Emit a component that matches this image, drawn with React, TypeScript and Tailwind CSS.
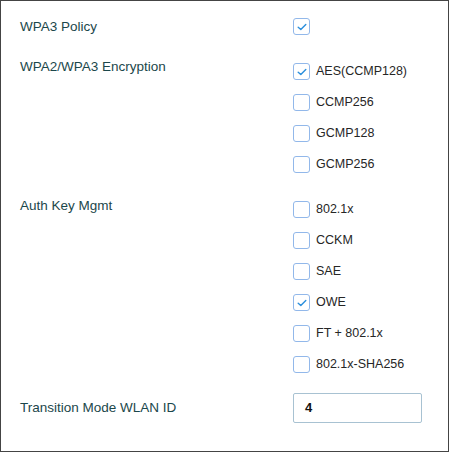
import React from "react";

function Box({ checked }: { checked?: boolean }) {
  return (
    <span className="flex h-[17px] w-[17px] shrink-0 items-center justify-center rounded-[3px] border-[1.5px] border-[#92b8ea] bg-white">
      {checked && (
        <svg width="10" height="8" viewBox="0 0 10 8">
          <path d="M1.2 4.2 L3.8 6.6 L8.8 1.4" fill="none" stroke="#2b8fdc" strokeWidth="1.4" strokeLinecap="round" strokeLinejoin="round" />
        </svg>
      )}
    </span>
  );
}

function Option({ label, checked }: { label?: string; checked?: boolean }) {
  return (
    <div className="flex h-[17px] items-center">
      <Box checked={checked} />
      {label && <span className="ml-[6px] text-[12.5px] leading-none text-[#262626]">{label}</span>}
    </div>
  );
}

function Label({ children }: { children: React.ReactNode }) {
  return <div className="w-[273px] shrink-0 text-[13.5px] leading-none text-[#1b474b]">{children}</div>;
}

export default function App() {
  const font = { fontFamily: '"Liberation Sans", Arial, sans-serif' };
  return (
    <div style={font} className="h-[452px] w-[449px] border border-[#444] bg-white pl-[19px] pt-[17px]">
      <div className="flex items-center">
        <Label>WPA3 Policy</Label>
        <Option checked />
      </div>
      <div className="mt-[28px] flex">
        <Label>
          <span className="relative -top-[4px] block pt-[1px]">WPA2/WPA3 Encryption</span>
        </Label>
        <div className="flex flex-col gap-[14px]">
          <Option label="AES(CCMP128)" checked />
          <Option label="CCMP256" />
          <Option label="GCMP128" />
          <Option label="GCMP256" />
        </div>
      </div>
      <div className="mt-[28px] flex">
        <Label>
          <span className="relative -top-[3px] block pt-[1px]">Auth Key Mgmt</span>
        </Label>
        <div className="flex flex-col gap-[14px]">
          <Option label="802.1x" />
          <Option label="CCKM" />
          <Option label="SAE" />
          <Option label="OWE" checked />
          <Option label="FT + 802.1x" />
          <Option label="802.1x-SHA256" />
        </div>
      </div>
      <div className="mt-[20px] flex items-center">
        <Label>Transition Mode WLAN ID</Label>
        <div className="flex h-[30px] w-[129px] items-center rounded-[2px] border border-[#a8c2d2] pl-[11px] text-[13px] font-bold text-[#111]">
          4
        </div>
      </div>
    </div>
  );
}
